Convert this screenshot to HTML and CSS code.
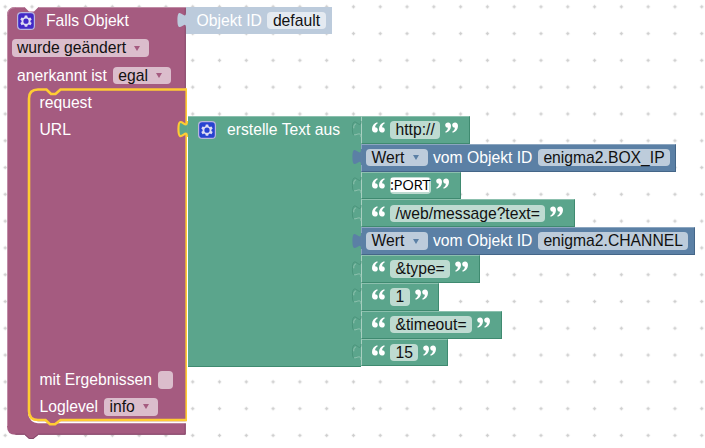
FILE: index.html
```html
<!DOCTYPE html>
<html lang="de">
<head>
<meta charset="utf-8">
<title>Blockly</title>
<link rel="stylesheet" href="styles.css">
</head>
<body>
<svg class="defs" width="0" height="0" aria-hidden="true">
  <symbol id="quote" viewBox="0 0 13 11">
    <path id="comma" d="M5.2 .2C2 1.1 0 3.7 0 7C0 9.2 1.1 10.6 2.9 10.6C4.6 10.6 5.8 9.5 5.8 7.9C5.8 6.3 4.7 5.2 3.1 5.2C3.2 3.4 4.1 2.2 5.8 1.2Z"/>
    <use href="#comma" x="7"/>
  </symbol>
  <symbol id="gear" viewBox="0 0 18 18">
    <rect x=".6" y=".6" width="16.8" height="16.8" rx="3.5" fill="currentColor" stroke="#b9b5dd" stroke-width="1.2"/>
    <path d="M7.8 3.6h2.4l.4 1.7 1.2.7 1.7-.6 1.2 2.1-1.3 1.2v1.2l1.3 1.2-1.2 2.1-1.7-.6-1.2.7-.4 1.5H7.8l-.4-1.5-1.2-.7-1.7.6-1.2-2.1 1.3-1.2V8.7L3.3 7.500l1.2-2.1 1.7.6 1.2-.7ZM9 6.600a2.600 2.600 0 1 0 0 5.200a2.600 2.600 0 1 0 0-5.200Z" fill="#dedcf3" fill-rule="evenodd"/>
  </symbol>
  <symbol id="tab" viewBox="0 0 9.330 15" overflow="visible">
    <path d="M9.300 0H8.400c0 10 -8 -8 -8 7.500s8 -2.500 8 7.500h.9Z"/>
  </symbol>
  <symbol id="socket" viewBox="0 0 9.330 15" overflow="visible">
    <path d="M8.400 0c0 10 -8 -8 -8 7.500" fill="none" stroke="#4a937a" stroke-width=".9"/>
    <path d="M.4 7.500s0 5.500 1.200 5.600" fill="none" stroke="#4a937a" stroke-width=".9"/>
    <path d="M1.600 6.800c0 -3 .8 -4.300 2.200 -3.900M2 12.800c2 .8 6.400 -3.500 6.400 2.200" fill="none" stroke="#93c4b1" stroke-width=".9"/>
  </symbol>
</svg>
<main class="workspace">
  <svg class="grid" width="705" height="448" aria-hidden="true">
    <defs>
      <pattern id="dots" x="-8.200" y="-6.600" width="26.790" height="26.790" patternUnits="userSpaceOnUse">
        <path d="M11.700 13.400h3.400M13.400 11.700v3.400" stroke="#cfcfcf" stroke-width="1.300"/>
      </pattern>
    </defs>
    <rect width="705" height="448" fill="url(#dots)"/>
  </svg>

  <section class="block event">
    <svg class="shape" width="180" height="434" viewBox="7 7 180 434" aria-hidden="true">
      <path d="M7 15.500Q7 7 15.500 7H24.500L29 11.500H34L38.500 7H185.700V89.500H187V421H185.700V434.700H38.500L33.500 439H29L24.500 434.700H15.500Q7 434.700 7 426.200Z" fill="#a55b80"/>
      <path d="M7.500 426V15.500Q7.500 7.500 15.500 7.500H24.500M38.500 7.500H185.500" fill="none" stroke="#c08ca6"/>
      <path d="M185.300 8V88M15.500 434.200H24.500L29.500 438.500H33L38.500 434.200H185.200V423" fill="none" stroke="#84496a"/>
      <path d="M29 414Q31 422 38 422.200H187" fill="none" stroke="#fff" stroke-width="2"/>
      <path d="M29 98.500Q29 89.500 38 89.500H46.500L51 94H55.500L60.500 89.500H186.700V420H60.500L55 424.300H50L45.500 420H38Q29 420 29 411Z" fill="#a55b80" stroke="#fc3" stroke-width="2.600"/>
    </svg>
    <div class="row head"><svg class="gear violet"><use href="#gear"/></svg><span>Falls Objekt</span></div>
    <div class="row option"><span class="field changed">wurde geändert<i class="arrow"></i></span></div>
    <div class="row ack"><span>anerkannt ist</span><span class="field ack-value">egal<i class="arrow"></i></span></div>
    <div class="statement">
      <div class="row">request</div>
      <div class="row">URL</div>
      <div class="row results"><span>mit Ergebnissen</span><span class="field check"></span></div>
      <div class="row"><span>Loglevel</span><span class="field level">info<i class="arrow"></i></span></div>
    </div>
  </section>

  <section class="block shadow">
    <svg class="tab"><use href="#tab"/></svg>
    <span>Objekt ID</span><span class="field">default</span>
  </section>

  <section class="block join">
    <svg class="tab" viewBox="0 0 9.330 15"><path d="M9.300 0H8.400c0 10 -8 -8 -8 7.500s8 -2.500 8 7.500h.9Z"/><path d="M8.400 0c0 10 -8 -8 -8 7.500s8 -2.500 8 7.500" fill="none" stroke="#fc3" stroke-width="2"/></svg>
    <div class="join-label"><svg class="gear blue"><use href="#gear"/></svg><span>erstelle Text aus</span></div>
    <div class="values">
      <div class="value text w-http"><svg class="tab"><use href="#socket"/></svg><svg class="quote"><use href="#quote"/></svg><span class="field">http://</span><svg class="quote close"><use href="#quote"/></svg></div>
      <div class="value state w-box"><svg class="tab"><use href="#tab"/></svg><span class="field wert">Wert<i class="arrow"></i></span><span>vom Objekt ID</span><span class="field id">enigma2.BOX_IP</span></div>
      <div class="value text w-port"><svg class="tab"><use href="#socket"/></svg><svg class="quote"><use href="#quote"/></svg><span class="field port"><b>:PORT</b></span><svg class="quote close"><use href="#quote"/></svg></div>
      <div class="value text w-web"><svg class="tab"><use href="#socket"/></svg><svg class="quote"><use href="#quote"/></svg><span class="field">/web/message?text=</span><svg class="quote close"><use href="#quote"/></svg></div>
      <div class="value state w-channel"><svg class="tab"><use href="#tab"/></svg><span class="field wert">Wert<i class="arrow"></i></span><span>vom Objekt ID</span><span class="field id">enigma2.CHANNEL</span></div>
      <div class="value text w-type"><svg class="tab"><use href="#socket"/></svg><svg class="quote"><use href="#quote"/></svg><span class="field">&amp;type=</span><svg class="quote close"><use href="#quote"/></svg></div>
      <div class="value text w-one"><svg class="tab"><use href="#socket"/></svg><svg class="quote"><use href="#quote"/></svg><span class="field">1</span><svg class="quote close"><use href="#quote"/></svg></div>
      <div class="value text w-timeout"><svg class="tab"><use href="#socket"/></svg><svg class="quote"><use href="#quote"/></svg><span class="field">&amp;timeout=</span><svg class="quote close"><use href="#quote"/></svg></div>
      <div class="value text w-fifteen"><svg class="tab"><use href="#socket"/></svg><svg class="quote"><use href="#quote"/></svg><span class="field">15</span><svg class="quote close"><use href="#quote"/></svg></div>
    </div>
  </section>
</main>
</body>
</html>
```
FILE: styles.css
```css
* { box-sizing: border-box; }
body { margin: 0; background: #fff; overflow: hidden; }
.defs { position: absolute; }
.workspace {
  position: relative;
  width: 705px;
  height: 448px;
  overflow: hidden;
  font: 15.700px/17.500px "Liberation Sans", Arial, sans-serif;
  color: #fff;
  white-space: nowrap;
}
.grid { display: block; }
.block { position: absolute; }
.shape { position: absolute; left: 0; top: 0; z-index: -1; }

.event { left: 7px; top: 6.600px; width: 180px; padding-top: .6px; z-index: 0; }
.row { display: flex; align-items: center; height: 27px; }
.head { padding-left: 9.500px; gap: 11.500px; }
.option { padding-left: 4.500px; height: 28px; }
.ack { padding-left: 10px; gap: 6px; height: 27px; }
.statement { padding: .5px 0 0 32.500px; }
.results { margin-top: 223px; gap: 6px; }
.statement .row:last-child { height: 26.500px; gap: 6px; }

.field {
  display: flex;
  align-items: center;
  height: 17.500px;
  padding: 0 5.500px;
  border-radius: 4px;
  background: #dbbdcc;
  color: #111;
}
.arrow {
  margin-left: auto;
  border: 3px solid transparent;
  border-top: 5px solid #a55b80;
  border-bottom: 0;
}
.changed { width: 137.500px; padding-right: 9px; }
.ack-value { width: 58px; padding-right: 9px; }
.check { width: 15.500px; padding: 0; }
.level { width: 54px; padding-right: 9px; }

.gear { width: 18px; height: 18px; flex: none; }
.violet { color: #4229c8; }
.blue { color: #2742d1; }

.shadow {
  left: 186px;
  top: 6.800px;
  width: 145.500px;
  height: 27.500px;
  display: flex;
  align-items: center;
  gap: 5.500px;
  padding-left: 10.500px;
  background: #bccbdc;
  fill: #bccbdc;
}
.shadow .field { background: #e4eaf1; }
.tab { position: absolute; left: -9px; top: 5.400px; width: 10px; height: 16.080px; overflow: visible; }

.join {
  left: 187.500px;
  top: 116px;
  display: flex;
  width: 173.500px;
  height: 250.500px;
  background: #5ba58c;
  fill: #5ba58c;
  border-top: 1px solid #8cc0ae;
  border-bottom: 1px solid #3f8a70;
}
.join > .tab { left: -9.500px; top: 4.400px; }
.join-label { display: flex; align-items: center; gap: 11.500px; width: 173.500px; flex: none; height: 25.500px; padding-left: 10px; }
.values { display: grid; grid-template-rows: repeat(9, 27.830px); flex: none; margin-top: -1px; }
.value {
  position: relative;
  display: flex;
  align-items: center;
  border: 1px solid;
  padding-bottom: .2px;
}
.text { background: #5ba58c; border-color: #8cc0ae #3f8a70 #3f8a70 #a9cfc1; padding-left: 10px; gap: 5px; }
.text .field { background: #bedbd1; }
.value > .tab { left: -10px; top: 4.400px; }
.state { background: #5b80a5; fill: #5b80a5; border-color: #8ca6c0 #446688 #446688 #8ca6c0; padding-left: 4px; gap: 5.500px; }
.state .field { background: #bdccdb; }
.state .arrow { border-top-color: #5b80a5; }
.wert { width: 61.500px; padding-right: 9px; }
.quote { width: 13px; height: 11px; fill: #fff; flex: none; margin-top: -4px; }
.close { transform: rotate(180deg); }
.port { width: 41px; padding: 0; }
.port b {
  width: 40px;
  height: 14px;
  margin-top: -1px;
  background: linear-gradient(#fff, #fff) 1px 0 / 38px 14px no-repeat;
  font: 15px/13px "Open Sans", sans-serif;
  letter-spacing: -.400px;
  color: #000;
}
.w-http { width: 108.500px; }
.w-box { width: 315px; }
.w-port { width: 100px; }
.w-web { width: 213.500px; }
.w-channel { width: 333.500px; }
.w-type { width: 118.500px; }
.w-one { width: 78px; }
.w-timeout { width: 140.500px; }
.w-fifteen { width: 87px; }
```
